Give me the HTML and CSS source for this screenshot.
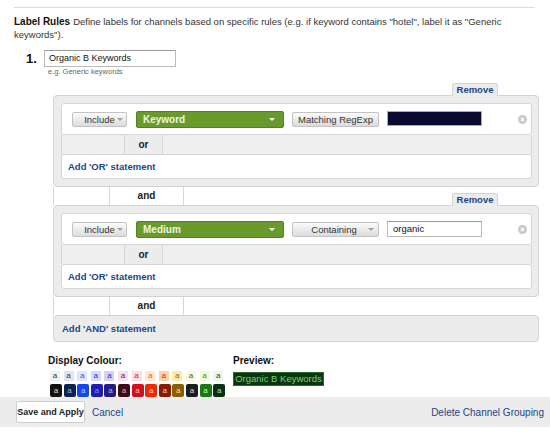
FILE: index.html
```html
<!DOCTYPE html>
<html>
<head>
<meta charset="utf-8">
<link rel="stylesheet" href="styles.css">
</head>
<body>
<div class="page">
  <div class="topline"></div>
  <div class="intro">
    <div class="introline"><b class="title">Label Rules</b><span class="desc">Define labels for channels based on specific rules (e.g. if keyword contains "hotel", label it as "Generic</span></div>
    <div class="introline">keywords").</div>
  </div>
  <div class="rule">
    <div class="num">1.</div>
    <div class="namecol">
      <div class="namefield">Organic B Keywords</div>
      <div class="hint">e.g. Generic keywords</div>
    </div>
  </div>

  <div class="builder">
    <div class="tabrow"><span class="tab">Remove</span></div>
    <div class="group">
      <div class="cond">
        <span class="btn include">Include<i class="caret"></i></span>
        <span class="dim">Keyword<i class="caret light"></i></span>
        <span class="btn match">Matching RegExp</span>
        <span class="field dark"></span>
        <span class="clear"><svg width="9" height="9" viewBox="0 0 9 9"><path d="M3 3 L6 6 M6 3 L3 6" stroke="#fff" stroke-width="1.2"/></svg></span>
      </div>
      <div class="sep or"><span class="seg l"></span><span class="lbl">or</span><span class="seg r"></span></div>
      <div class="add">Add 'OR' statement</div>
    </div>

    <div class="sep and"><span class="seg l"></span><span class="lbl">and</span><span class="seg r"></span><span class="tab">Remove</span></div>

    <div class="group">
      <div class="cond">
        <span class="btn include">Include<i class="caret"></i></span>
        <span class="dim">Medium<i class="caret light"></i></span>
        <span class="btn containing">Containing<i class="caret far"></i></span>
        <span class="field text">organic</span>
        <span class="clear"><svg width="9" height="9" viewBox="0 0 9 9"><path d="M3 3 L6 6 M6 3 L3 6" stroke="#fff" stroke-width="1.2"/></svg></span>
      </div>
      <div class="sep or"><span class="seg l"></span><span class="lbl">or</span><span class="seg r"></span></div>
      <div class="add">Add 'OR' statement</div>
    </div>

    <div class="sep and last"><span class="seg l"></span><span class="lbl">and</span><span class="seg r"></span></div>

    <div class="addand">Add 'AND' statement</div>
  </div>

  <div class="display">
    <div class="colours">
      <div class="dlabel">Display Colour:</div>
      <div class="swatches">
        <span class="sw l1">a</span><span class="sw l2">a</span><span class="sw l3">a</span><span class="sw l4">a</span><span class="sw l5">a</span><span class="sw l6">a</span><span class="sw l7">a</span><span class="sw l8">a</span><span class="sw l9">a</span><span class="sw l10">a</span><span class="sw l11">a</span><span class="sw l12">a</span><span class="sw l13">a</span>
        <span class="sw d d1">a</span><span class="sw d d2">a</span><span class="sw d d3">a</span><span class="sw d d4">a</span><span class="sw d d5">a</span><span class="sw d d6">a</span><span class="sw d d7">a</span><span class="sw d d8">a</span><span class="sw d d9">a</span><span class="sw d d10">a</span><span class="sw d d11">a</span><span class="sw d d12">a</span><span class="sw d d13">a</span>
      </div>
    </div>
    <div class="preview">
      <div class="dlabel">Preview:</div>
      <div class="badge">Organic B Keywords</div>
    </div>
  </div>
</div>

<div class="footer">
  <span class="save">Save and Apply</span>
  <span class="cancel">Cancel</span>
  <span class="delete">Delete Channel Grouping</span>
</div>
</body>
</html>
```

FILE: styles.css
```css
* { box-sizing: border-box; }
body {
  margin: 0;
  background: #fff;
  font-family: "Liberation Sans", Arial, sans-serif;
  font-size: 10px;
  color: #222;
}
.page { padding: 0 15px 0 14px; }
.topline { margin-top: 7px; height: 1px; background: #dcdcdc; }
.intro {
  margin-top: 7px;
  line-height: 13px;
  font-size: 9.5px;
  color: #333;
}
.introline { display: flex; align-items: baseline; white-space: nowrap; }
.title { margin-right: 3px; color: #111; font-size: 10px; }

.rule { display: flex; margin-top: 9px; padding-left: 12px; }
.num { width: 18px; font-weight: bold; font-size: 13px; line-height: 18px; color: #111; }
.namefield {
  width: 132px; height: 17px;
  border: 1px solid #bbb; border-top-color: #999;
  font-size: 9px; line-height: 15px; padding-left: 4px; color: #111;
}
.hint { font-size: 7.5px; color: #666; line-height: 10px; padding-left: 4px; margin-top: 0; }

.builder { margin-left: 39px; width: 486px; margin-top: 6px; }
.tabrow { display: flex; justify-content: flex-end; padding-right: 41px; height: 12px; }
.tab {
  position: relative; z-index: 1;
  width: 46px; height: 13px;
  background: #ececec;
  border: 1px solid #d3d3d3; border-bottom: none;
  border-radius: 3px 3px 0 0;
  font-weight: bold; color: #1c4587; font-size: 9.5px; line-height: 12px;
  text-align: center;
}
.group {
  background: #ececec;
  border: 1px solid #d3d3d3;
  border-radius: 4px;
  padding: 7px 6px 7px 7px;
}
.cond {
  display: flex; align-items: center;
  height: 32px;
  background: #fff;
  border: 1px solid #d6d6d6;
  border-radius: 3px;
  padding-left: 10px;
}
.btn {
  height: 15px;
  border: 1px solid #c3c3c3;
  border-radius: 2px;
  background: linear-gradient(#fbfbfb, #dcdcdc);
  font-size: 9.5px; color: #333;
  display: flex; align-items: center; justify-content: center;
}
.include { width: 55px; margin-right: 9px; padding-left: 8px; }
.match { width: 87px; margin-right: 8px; }
.containing { width: 87px; margin-right: 8px; padding-left: 14px; }
.caret {
  width: 0; height: 0;
  border-left: 3px solid transparent; border-right: 3px solid transparent;
  border-top: 3px solid #a0a0a0;
  margin-left: 2px;
}
.caret.far { margin-left: 11px; }
.caret.light { border-top-color: #fff; margin-left: auto; margin-right: 8px; }
.dim {
  width: 148px; height: 17px;
  background: #699b2c;
  border: 1px solid #557f22;
  border-radius: 2px;
  color: #eef3e0; font-weight: bold; font-size: 10px;
  display: flex; align-items: center;
  padding-left: 6px; margin-right: 8px;
}
.field { width: 95px; height: 16px; border: 1px solid #bbb; border-top-color: #999; }
.field.dark { height: 15px; background: #0a0a30; border-color: #aab; margin-top: -2px; }
.field.text { font-size: 9.5px; line-height: 14px; padding-left: 5px; color: #111; }
.clear {
  margin-left: auto; margin-right: 4px;
  width: 9px; height: 9px; border-radius: 50%;
  background: #c9c9c9; display: flex;
}

.sep { display: flex; }
.seg { border-left: 1px solid #d6d6d6; border-right: 1px solid #d6d6d6; }
.lbl { font-weight: bold; font-size: 10px; color: #222; text-align: center; }
.or { height: 19px; }
.or .seg { background: #efefef; }
.or .seg.l { width: 64px; }
.or .lbl { width: 37px; line-height: 19px; }
.or .seg.r { flex: 1; }
.add {
  height: 25px;
  background: #fff;
  border: 1px solid #d6d6d6;
  border-radius: 3px;
  padding-left: 6px;
  font-weight: bold; color: #1c4587; font-size: 9.5px; line-height: 23px;
}
.and { height: 18px; align-items: flex-end; }
.and .seg { align-self: stretch; background: #fff; }
.and .seg.l { width: 57px; }
.and .lbl { width: 73px; line-height: 18px; align-self: stretch; }
.and .seg.r { flex: 1; border-right: none; }
.and .tab { margin-left: 0; margin-right: 41px; margin-bottom: -1px; }
.addand {
  height: 27px;
  background: #ececec;
  border: 1px solid #d3d3d3;
  border-radius: 4px;
  padding-left: 8px;
  font-weight: bold; color: #1c4587; font-size: 9.5px; line-height: 25px;
}

.display { display: flex; margin-left: 34px; margin-top: 14px; }
.colours { width: 185px; }
.dlabel { font-weight: bold; font-size: 10px; line-height: 10px; color: #111; }
.swatches {
  display: grid;
  grid-template-columns: repeat(13, 13.6px);
  row-gap: 3px;
  margin-top: 5px; margin-left: 2px;
}
.sw { width: 10px; height: 10px; font-size: 8px; line-height: 10px; text-align: center; }
.sw.d { width: 12px; height: 13px; border-radius: 2px; line-height: 13px; }
.l1 { background: #f2f2f2; color: #333; }
.l2 { background: #dfe4ee; color: #1f3a66; }
.l3 { background: #dde6ff; color: #2a5cff; }
.l4 { background: #d3dbff; color: #1d2fd0; }
.l5 { background: #d7cff5; color: #3d2a99; }
.l6 { background: #f8dff0; color: #6a1430; }
.l7 { background: #ffdde2; color: #cc1a2a; }
.l8 { background: #ffe6d6; color: #f05a22; }
.l9 { background: #ffd2a6; color: #a63a0a; }
.l10 { background: #ffe9a8; color: #9a6a00; }
.l11 { background: #fff8d8; color: #555; }
.l12 { background: #eefbe0; color: #2f8f2f; }
.l13 { background: #eef5ee; color: #1d4d2a; }
.d1 { background: #121212; color: #ddd; }
.d2 { background: #0b2450; color: #aab8d8; }
.d3 { background: #1446f0; color: #b8c8ff; }
.d4 { background: #1d1db0; color: #8890d0; }
.d5 { background: #261a85; color: #b8b0e0; }
.d6 { background: #3d0a16; color: #d9b0bb; }
.d7 { background: #d0101c; color: #ffbbbb; }
.d8 { background: #f02a05; color: #ffccbb; }
.d9 { background: #861a02; color: #ffccbb; }
.d10 { background: #8c5c00; color: #ffdd88; }
.d11 { background: #1c1c1c; color: #ddd; }
.d12 { background: #1a7a12; color: #bbffbb; }
.d13 { background: #0a3014; color: #bbddbb; }

.preview { display: flex; flex-direction: column; }
.badge {
  margin-top: 6px;
  width: 91px; height: 14px;
  background: #0b3510;
  border: 1px solid #2c6a2c;
  color: #6fd46f;
  font-size: 9.5px; line-height: 12px;
  text-align: center;
}

.footer {
  margin-top: 0;
  display: flex; align-items: center;
  height: 30px;
  background: #ececec;
  padding: 0 6px 0 16px;
}
.save {
  height: 22px; width: 69px;
  background: #fff;
  border: 1px solid #cfcfcf;
  border-radius: 2px;
  font-weight: bold; font-size: 9px; color: #222;
  display: flex; align-items: center; justify-content: center;
}
.cancel { margin-left: 7px; color: #1c4587; font-size: 10px; }
.delete { margin-left: auto; color: #1c4587; font-size: 10px; }
```
